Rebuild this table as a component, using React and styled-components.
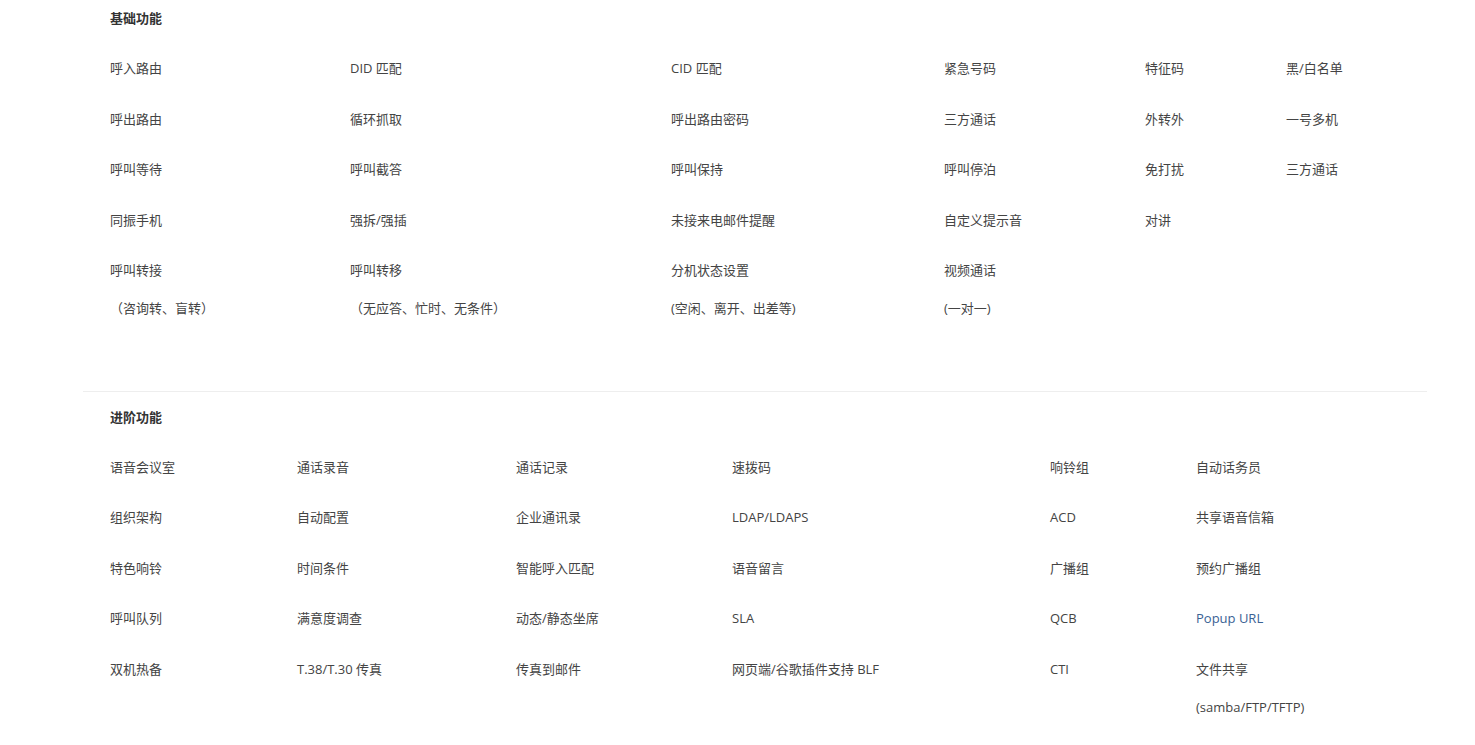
import styled, { createGlobalStyle } from "styled-components";

const GlobalStyle = createGlobalStyle`
  body {
    margin: 0;
    background: #fff;
    font-family: "Open Sans", "Noto Sans CJK SC", sans-serif;
    font-size: 13px;
    color: #444;
  }
`;

const basic = [
  [
    { t: "呼入路由" },
    { t: "DID 匹配" },
    { t: "CID 匹配" },
    { t: "紧急号码" },
    { t: "特征码" },
    { t: "黑/白名单" },
  ],
  [
    { t: "呼出路由" },
    { t: "循环抓取" },
    { t: "呼出路由密码" },
    { t: "三方通话" },
    { t: "外转外" },
    { t: "一号多机" },
  ],
  [
    { t: "呼叫等待" },
    { t: "呼叫截答" },
    { t: "呼叫保持" },
    { t: "呼叫停泊" },
    { t: "免打扰" },
    { t: "三方通话" },
  ],
  [
    { t: "同振手机" },
    { t: "强拆/强插" },
    { t: "未接来电邮件提醒" },
    { t: "自定义提示音" },
    { t: "对讲" },
    null,
  ],
  [
    { t: "呼叫转接", sub: "（咨询转、盲转）" },
    { t: "呼叫转移", sub: "（无应答、忙时、无条件）" },
    { t: "分机状态设置", sub: "(空闲、离开、出差等)" },
    { t: "视频通话", sub: "(一对一)" },
    null,
    null,
  ],
];

const advanced = [
  [
    { t: "语音会议室" },
    { t: "通话录音" },
    { t: "通话记录" },
    { t: "速拨码" },
    { t: "响铃组" },
    { t: "自动话务员" },
  ],
  [
    { t: "组织架构" },
    { t: "自动配置" },
    { t: "企业通讯录" },
    { t: "LDAP/LDAPS" },
    { t: "ACD" },
    { t: "共享语音信箱" },
  ],
  [
    { t: "特色响铃" },
    { t: "时间条件" },
    { t: "智能呼入匹配" },
    { t: "语音留言" },
    { t: "广播组" },
    { t: "预约广播组" },
  ],
  [
    { t: "呼叫队列" },
    { t: "满意度调查" },
    { t: "动态/静态坐席" },
    { t: "SLA" },
    { t: "QCB" },
    { t: "Popup URL", link: true },
  ],
  [
    { t: "双机热备" },
    { t: "T.38/T.30 传真" },
    { t: "传真到邮件" },
    { t: "网页端/谷歌插件支持 BLF" },
    { t: "CTI" },
    { t: "文件共享", sub: "(samba/FTP/TFTP)" },
  ],
];

function App() {
  return (
    <>
      <GlobalStyle />
      <Page>
        <Section $top={8} $bottom={57}>
          <Title>基础功能</Title>
          <Grid $cols="240px 321px 273px 201px 141px 1fr">
            {basic.flat().map((c, i) => (
              <Cell key={i}>
                {c && <Main $link={c.link}>{c.t}</Main>}
                {c && c.sub && <Sub>{c.sub}</Sub>}
              </Cell>
            ))}
          </Grid>
        </Section>
        <Divider />
        <Section $top={15} $bottom={10}>
          <Title>进阶功能</Title>
          <Grid $cols="187px 219px 216px 318px 146px 1fr">
            {advanced.flat().map((c, i) => (
              <Cell key={i}>
                {c && <Main $link={c.link}>{c.t}</Main>}
                {c && c.sub && <Sub>{c.sub}</Sub>}
              </Cell>
            ))}
          </Grid>
        </Section>
      </Page>
    </>
  );
}

const Page = styled.div`
  margin-left: 83px;
  width: 1344px;
`;

const Section = styled.section`
  padding: ${(p) => p.$top}px 0 ${(p) => p.$bottom}px 27px;
`;

const Title = styled.h3`
  margin: 0 0 15px;
  font-size: 13px;
  line-height: 20px;
  font-weight: 700;
  color: #333;
`;

const Grid = styled.div`
  display: grid;
  grid-template-columns: ${(p) => p.$cols};
`;

const Cell = styled.div`
  padding: 15px 0 15.5px;
  line-height: 20px;
  white-space: nowrap;
`;

const Main = styled.div`
  color: ${(p) => (p.$link ? "#3a6294" : "#444")};
`;

const Sub = styled.div`
  margin-top: 18px;
  color: #444;
`;

const Divider = styled.hr`
  margin: 0;
  border: 0;
  height: 1px;
  background: #eeeeee;
`;

export default App;
